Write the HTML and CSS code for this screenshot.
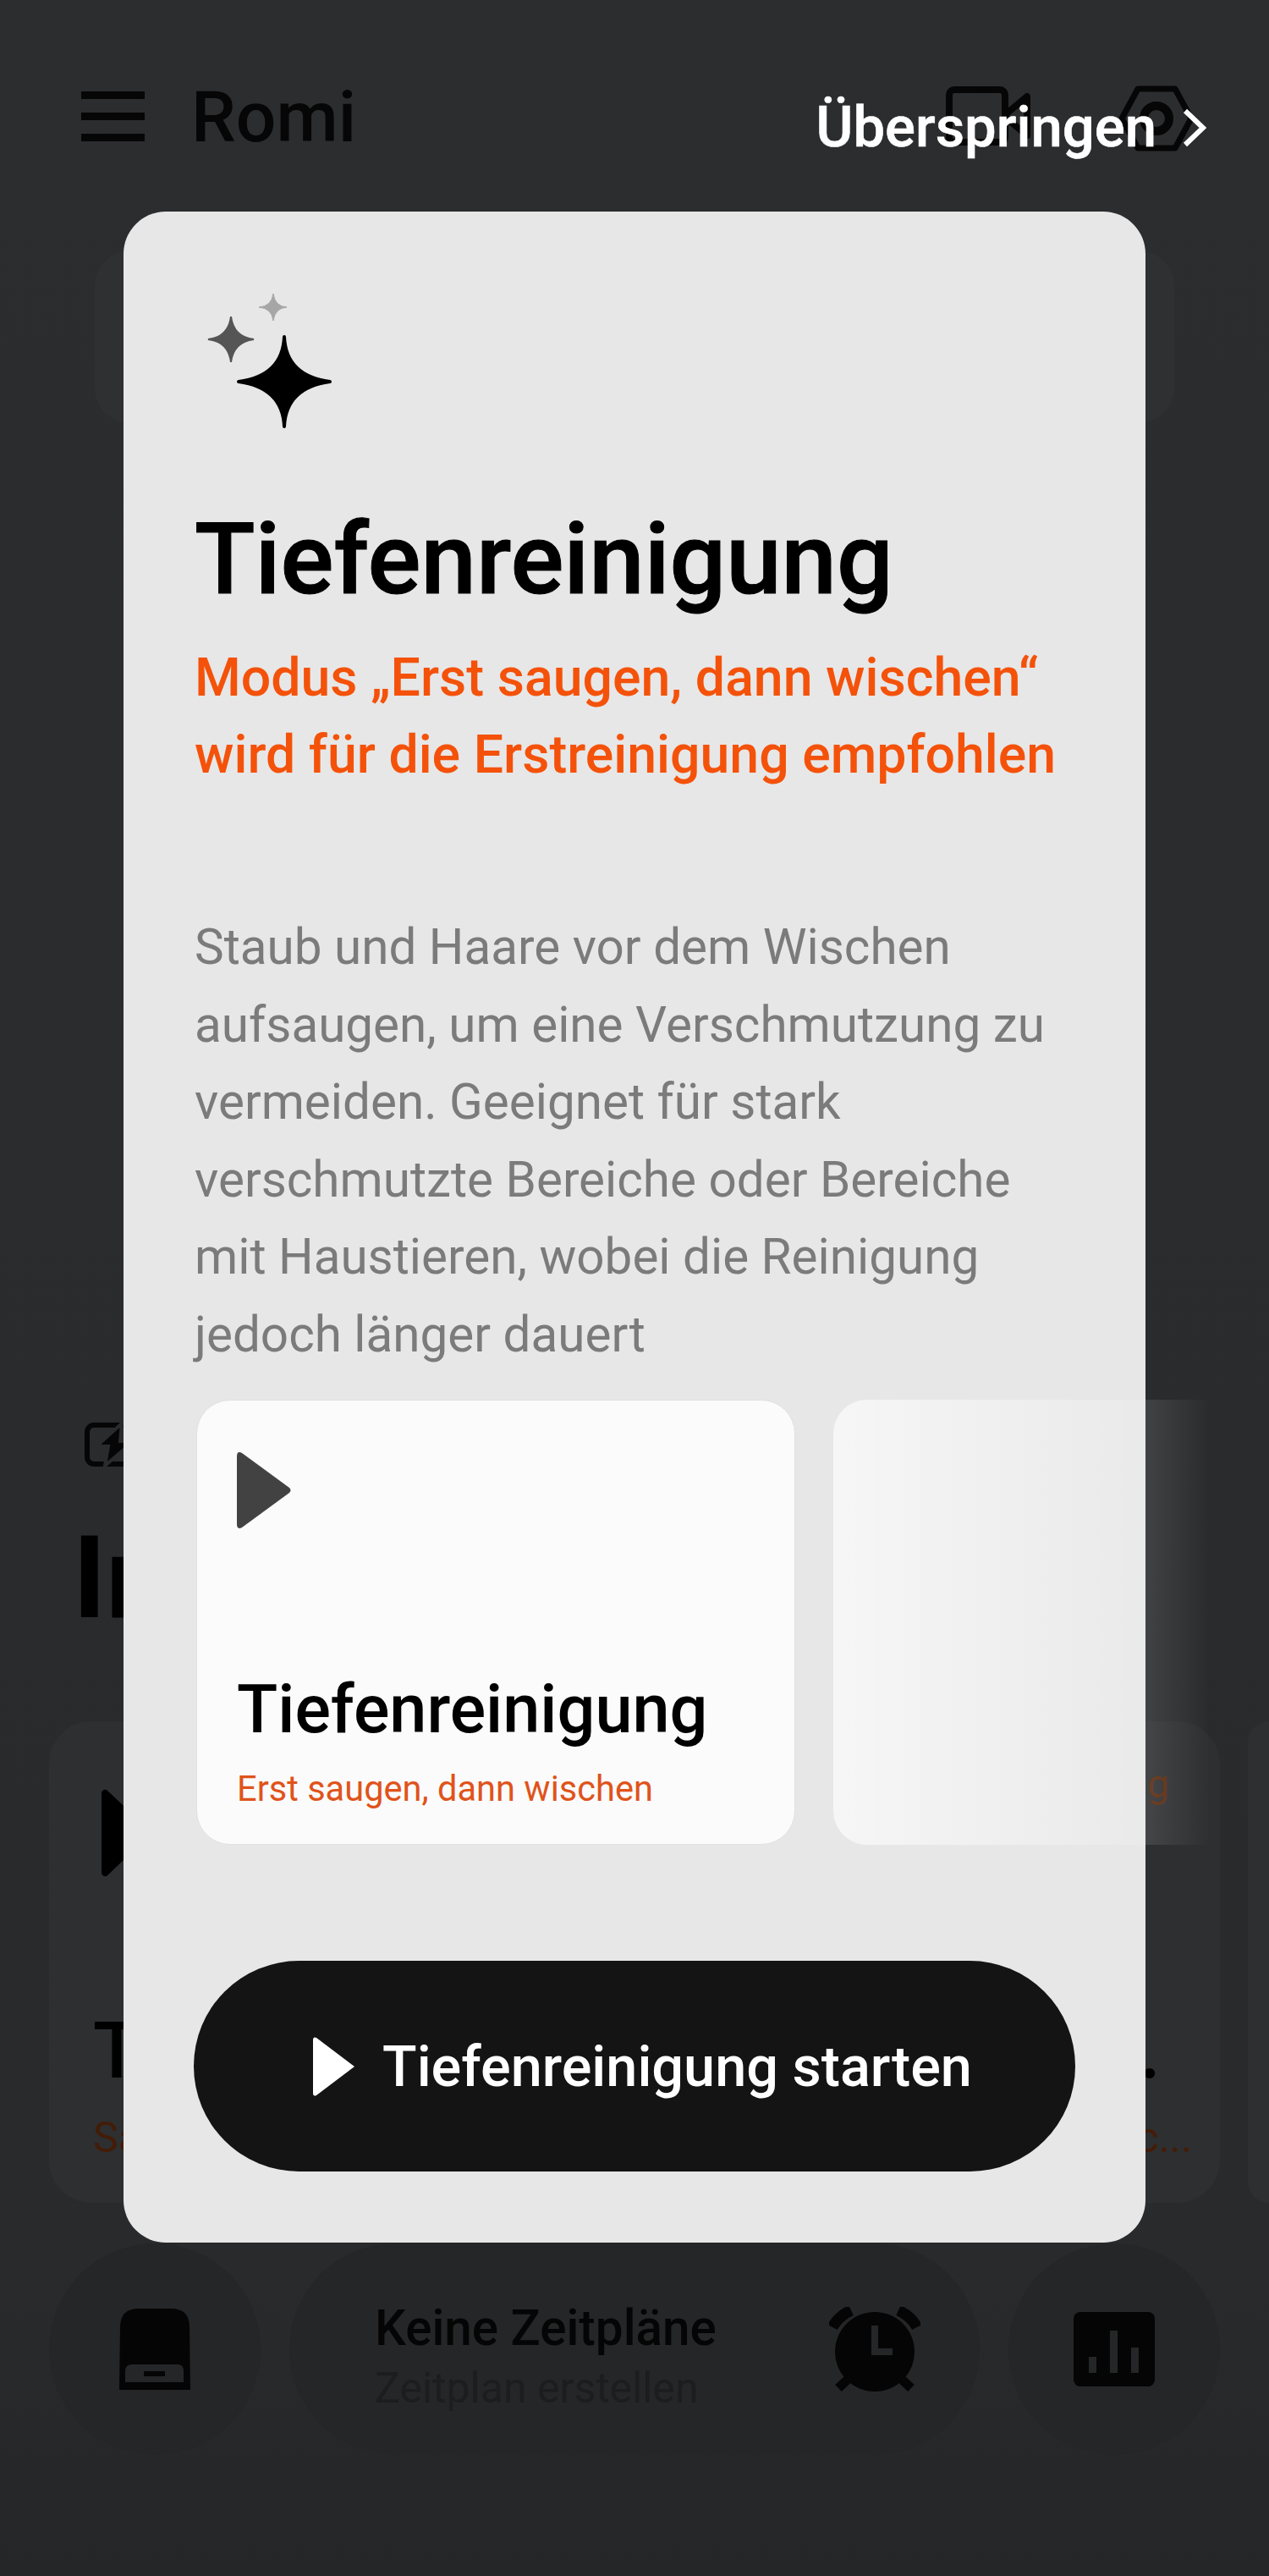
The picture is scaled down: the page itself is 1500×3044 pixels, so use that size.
FILE: index.html
```html
<!DOCTYPE html>
<html lang="de">
<head>
    <meta charset="UTF-8">
    <meta name="viewport" content="width=device-width, initial-scale=1.0">
    <title>Romi</title>
    <link rel="stylesheet" href="styles.css">
</head>
<body>
    <!-- Dimmed app page behind the dialog -->
    <div class="page">
        <header class="topbar">
            <svg class="menu-icon" width="75" height="60" viewBox="0 0 75 60">
                <rect width="75" height="9" y="0"/>
                <rect width="75" height="9" y="25"/>
                <rect width="75" height="9" y="50"/>
            </svg>
            <span class="robot-name">Romi</span>
            <svg class="video-icon" width="100" height="70" viewBox="0 0 100 70">
                <rect x="4" y="4" width="66" height="62" rx="6"/>
                <path d="M72 32 L96 12 V58 L72 38"/>
            </svg>
            <svg class="nut-icon" width="90" height="78" viewBox="0 0 90 78">
                <path d="M23 4 H67 L86 39 L67 74 H23 L4 39 Z"/>
                <circle cx="45" cy="39" r="15"/>
            </svg>
        </header>

        <div class="status-card"></div>

        <svg class="battery-icon" width="70" height="52" viewBox="0 0 70 52">
            <rect x="3" y="3" width="64" height="46" rx="8"/>
            <path class="bolt" d="M44 1 L14 28 H28 L24 51 L58 22 H42 Z"/>
        </svg>
        <h2 class="section-title">Intelligent</h2>

        <div class="mode-row">
            <div class="mode-card">
                <svg class="mode-play" width="60" height="104" viewBox="0 0 60 104"><path d="M0 6 Q0 0 6 1 L60 52 L6 103 Q0 104 0 98 Z"/></svg>
                <div class="mode-name">Tief</div>
                <div class="mode-sub">Saugen</div>
            </div>
            <div class="mode-card mode-card-end">
                <div class="mode-tag">Reinigung</div>
                <div class="mode-name">ge.</div>
                <div class="mode-sub">Feuc...</div>
            </div>
            <div class="mode-card mode-card-last"></div>
        </div>

        <div class="bottom-row">
            <div class="round-btn">
                <svg width="86" height="96" viewBox="0 0 86 96">
                    <path d="M1 96 L2 22 Q2 0 24 0 H62 Q84 0 84 22 L85 96 Z"/>
                    <path class="cut" d="M8 87 V74 Q8 66 16 66 H70 Q77 66 77 74 V87 Z"/>
                    <rect x="30" y="74" width="25" height="6"/>
                </svg>
            </div>
            <div class="schedule">
                <div class="schedule-text">
                    <div class="schedule-title">Keine Zeitpläne</div>
                    <div class="schedule-sub">Zeitplan erstellen</div>
                </div>
                <svg width="108" height="100" viewBox="0 0 108 100">
                    <circle cx="54" cy="53" r="47"/>
                    <path class="cut" d="M50 22 H58 V49 H75 V57 H50 Z"/>
                    <path class="bell" d="M26 4 Q11 11 4 24"/>
                    <path class="bell" d="M82 4 Q97 11 104 24"/>
                    <path class="leg" d="M26 82 L11 96"/>
                    <path class="leg" d="M82 82 L97 96"/>
                </svg>
            </div>
            <div class="round-btn">
                <svg width="96" height="88" viewBox="0 0 96 88">
                    <rect width="96" height="88" rx="8"/>
                    <rect class="cut" x="18" y="53" width="9" height="19"/>
                    <rect class="cut" x="43" y="22" width="9" height="50"/>
                    <rect class="cut" x="68" y="42" width="9" height="30"/>
                </svg>
            </div>
        </div>
    </div>

    <!-- Guide overlay -->
    <div class="overlay">
        <div class="skip">
            <span>Überspringen</span>
            <svg width="28" height="46" viewBox="0 0 28 46"><path d="M3 3 L24 23 L3 43"/></svg>
        </div>

        <div class="dialog">
            <svg class="sparkles" width="170" height="170" viewBox="0 0 170 170">
                <path fill="#a6a6a6" d="M93 7 Q95 22 109 23 Q95 24 93 39 Q91 24 76 23 Q91 22 93 7 Z" stroke="#a6a6a6" stroke-width="1"/>
                <path fill="#555555" d="M43 34 Q46 58 70 61 Q46 64 43 88 Q40 64 16 61 Q40 58 43 34 Z" stroke="#555555" stroke-width="2"/>
                <path fill="#000000" d="M106 58 Q108 104 160 111 Q108 118 106 164 Q104 118 52 111 Q104 104 106 58 Z" stroke="#000000" stroke-width="4" stroke-linejoin="round"/>
            </svg>

            <h1 class="dialog-title">Tiefenreinigung</h1>
            <p class="dialog-mode">Modus „Erst saugen, dann wischen“ wird für die Erstreinigung empfohlen</p>
            <p class="dialog-text">Staub und Haare vor dem Wischen aufsaugen, um eine Verschmutzung zu vermeiden. Geeignet für stark verschmutzte Bereiche oder Bereiche mit Haustieren, wobei die Reinigung jedoch länger dauert</p>

            <div class="option-row">
                <div class="option-card">
                    <svg class="option-play" width="64" height="90" viewBox="0 0 64 90"><path d="M0 5 Q0 -2 6 1 L62 42 Q65 45 62 48 L6 89 Q0 92 0 85 Z"/></svg>
                    <div class="option-name">Tiefenreinigung</div>
                    <div class="option-sub">Erst saugen, dann wischen</div>
                </div>
                <div class="option-next"></div>
            </div>

            <button class="start-btn">
                <svg width="50" height="70" viewBox="0 0 50 70"><path d="M0 4 Q0 -1 4 1 L49 35 L4 69 Q0 71 0 66 Z"/></svg>
                Tiefenreinigung starten
            </button>
        </div>
    </div>
</body>
</html>
```

FILE: styles.css
```css
* {
    margin: 0;
    padding: 0;
    box-sizing: border-box;
    font-family: Roboto, "Liberation Sans", sans-serif;
}

body {
    position: relative;
    width: 1500px;
    height: 3044px;
    overflow: hidden;
    background: linear-gradient(#2c2d2f 0%, #292a2c 88%, #252628 100%);
    color: #060606;
}

/* Page behind the dialog */
.page {
    padding: 99px 58px 0;
}

.topbar {
    display: flex;
    align-items: flex-start;
    height: 198px;
    padding-left: 38px;
}

.menu-icon {
    margin-top: 9px;
    fill: #060606;
}

.robot-name {
    margin: -9px auto 0 55px;
    font-size: 84px;
    font-weight: 500;
    line-height: 98px;
}

.video-icon {
    margin: 3px 104px 0 0;
    fill: none;
    stroke: #060606;
    stroke-width: 8;
    stroke-linejoin: round;
}

.nut-icon {
    margin: 2px 30px 0 0;
    fill: none;
    stroke: #060606;
    stroke-linejoin: round;
}

.nut-icon path {
    stroke-width: 7;
}

.nut-icon circle {
    stroke-width: 10;
}

.status-card {
    width: 1276px;
    height: 202px;
    margin-left: 54px;
    border-radius: 40px;
    background: #2f3032;
}

.battery-icon {
    display: block;
    margin: 1182px 0 0 42px;
    fill: none;
    stroke: #060606;
    stroke-width: 6;
}

.bolt {
    fill: #060606;
    stroke: #2a2b2d;
    stroke-width: 4;
}

.section-title {
    margin: 52px 0 0 28px;
    font-size: 135px;
    font-weight: 700;
    line-height: 160px;
    color: #000;
}

.mode-row {
    display: flex;
    gap: 33px;
    margin: 89px -58px 0 0;
}

.mode-card {
    flex: none;
    width: 650px;
    height: 569px;
    padding: 80px 0 0 52px;
    border-radius: 50px;
    background: #2e2f31;
}

.mode-card-end {
    width: 701px;
    padding: 46px 60px 0 0;
    text-align: right;
}

.mode-card-last {
    width: 25px;
    padding: 0;
    border-radius: 50px 0 0 50px;
}

.mode-play {
    display: block;
    margin-left: 10px;
    fill: #000;
}

.mode-name {
    margin-top: 152px;
    font-size: 92px;
    font-weight: 500;
    line-height: 108px;
    color: #000;
    white-space: nowrap;
}

.mode-sub {
    margin-top: 18px;
    font-size: 50px;
    line-height: 60px;
    color: #431c08;
    white-space: nowrap;
}

.mode-card-end .mode-name {
    margin: 234px 10px 0 0;
}

.mode-card-end .mode-sub {
    margin-right: -27px;
}

.mode-tag {
    font-size: 46px;
    line-height: 56px;
    color: #5a2a10;
}

.bottom-row {
    display: flex;
    gap: 34px;
    margin-top: 48px;
}

.round-btn {
    display: flex;
    align-items: center;
    justify-content: center;
    flex: none;
    width: 250px;
    height: 250px;
    border-radius: 50%;
    background: #252628;
}

.schedule {
    display: flex;
    align-items: center;
    justify-content: space-between;
    flex: none;
    width: 816px;
    height: 250px;
    padding: 0 70px 0 101px;
    border-radius: 125px;
    background: #252628;
}

.round-btn svg,
.schedule svg {
    fill: #050505;
}

.round-btn .cut,
.schedule .cut {
    fill: #252628;
}

.bell {
    fill: none;
    stroke: #050505;
    stroke-width: 13;
}

.leg {
    fill: none;
    stroke: #050505;
    stroke-width: 11;
}

.schedule-text {
    margin-top: 15px;
}

.schedule-title {
    font-size: 58.4px;
    font-weight: 500;
    line-height: 68px;
    color: #050505;
}

.schedule-sub {
    margin-top: 8px;
    font-size: 50px;
    line-height: 58px;
    color: #1c1d1f;
}

/* Overlay */
.overlay {
    position: absolute;
    top: 0;
    left: 0;
    width: 1500px;
    height: 3044px;
}

.skip {
    display: flex;
    align-items: center;
    justify-content: flex-end;
    gap: 31px;
    height: 250px;
    padding: 0 74px 0 0;
    color: #fff;
    font-size: 67px;
    font-weight: 500;
    -webkit-text-stroke: 0.6px #fff;
}

.skip span {
    margin-top: 50px;
}

.skip svg {
    margin-top: 52px;
    fill: none;
    stroke: #fff;
    stroke-width: 6;
}

.dialog {
    width: 1208px;
    height: 2400px;
    margin-left: 146px;
    padding: 90px 84px 84px;
    border-radius: 50px;
    background: #e7e7e7;
}

.sparkles {
    display: block;
}

.dialog-title {
    margin-top: 86px;
    font-size: 117.5px;
    font-weight: 500;
    line-height: 130px;
    color: #000;
    -webkit-text-stroke: 1px #000;
}

.dialog-mode {
    margin-top: 29px;
    font-size: 62.6px;
    font-weight: 500;
    line-height: 91px;
    color: #f4520a;
}

.dialog-text {
    margin-top: 137px;
    font-size: 58.4px;
    line-height: 91.5px;
    color: #7b7b7b;
}

.option-row {
    display: flex;
    gap: 45px;
    margin: 31px 0 137px 2px;
    height: 526px;
}

.option-card {
    flex: none;
    width: 708px;
    padding: 61px 0 0 47px;
    border: 1px solid #e1e1e1;
    border-radius: 40px;
    background: #fbfbfb;
}

/* next card fades out past the dialog edge */
.option-next {
    flex: none;
    width: 445px;
    border-radius: 40px 0 0 40px;
    background: linear-gradient(to right, rgba(255, 255, 255, 0.64), rgba(255, 255, 255, 0));
}

.option-play {
    display: block;
    fill: #424242;
}

.option-name {
    margin-top: 168px;
    font-size: 79.2px;
    font-weight: 500;
    line-height: 92px;
    color: #000;
}

.option-sub {
    margin-top: 23px;
    font-size: 41.6px;
    line-height: 50px;
    color: #e0531a;
}

.start-btn {
    display: flex;
    align-items: center;
    justify-content: center;
    gap: 32px;
    width: 1042px;
    height: 249px;
    margin-left: -1px;
    padding-left: 19px;
    border: none;
    border-radius: 125px;
    background: #141414;
    color: #fff;
    font-size: 66.6px;
    font-weight: 500;
}

.start-btn svg {
    fill: #fff;
}
```
